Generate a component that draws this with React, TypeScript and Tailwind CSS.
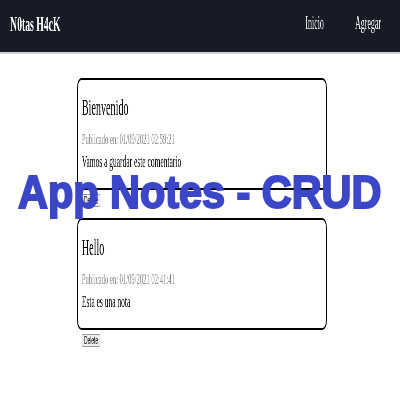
import React from "react";

type Note = {
  title: string;
  date: string;
  body: string;
};

const notes: Note[] = [
  {
    title: "Bienvenido",
    date: "01/09/2021 02:59:21",
    body: "Vamos a guardar este comentario",
  },
  {
    title: "Hello",
    date: "01/09/2021 02:41:41",
    body: "Esta es una nota",
  },
];

const NoteCard = ({ note }: { note: Note }) => {
  return (
    <div className="mb-[11px]">
      <div className="border-2 border-black rounded-[10px] pt-[15px] pb-[17px] px-[9px]">
        <h3 className="text-[23px] leading-[26px]">{note.title}</h3>
        <p className="mt-[10px] text-[15px] leading-[17px] text-[#8a8a8a]">
          Publicado en: {note.date}
        </p>
        <p className="mt-[4px] text-[17px] leading-[19px] text-black">
          {note.body}
        </p>
      </div>
      <button className="block mt-[4px] ml-[11px] h-[13px] px-[4px] text-[11px] leading-[11px] border border-[#9a9a9a] bg-[#efefef] rounded-[2px] font-['Liberation_Sans',Arial,sans-serif] text-black">
        Delete
      </button>
    </div>
  );
};

export default function App() {
  return (
    <div className="relative w-[400px] h-[400px] overflow-hidden bg-white font-['Liberation_Serif','Times_New_Roman',serif]">
      <div className="w-[909px] origin-top-left scale-x-[0.44] will-change-transform">
        <nav className="h-[54px] bg-[#161b26] border-b-2 border-[#cfd3d8] flex items-center justify-between pl-[23px] pr-[43px] pb-[6px]">
          <span className="text-white font-bold text-[22px]">N0tas H4cK</span>
          <div className="flex gap-[71px] text-[18px] text-white">
            <span>Inicio</span>
            <span>Agregar</span>
          </div>
        </nav>
        <main className="pl-[175px] pr-[166px] pt-[24px]">
          {notes.map((note, index) => (
            <NoteCard key={index} note={note} />
          ))}
        </main>
      </div>
      <div className="absolute left-[18px] top-[169px] origin-left scale-x-90 whitespace-nowrap font-['Liberation_Sans',Arial,sans-serif] font-bold text-[46px] leading-none text-[#3c46c8] [-webkit-text-stroke:2px_#3c46c8]">
        App Notes - CRUD
      </div>
    </div>
  );
}
